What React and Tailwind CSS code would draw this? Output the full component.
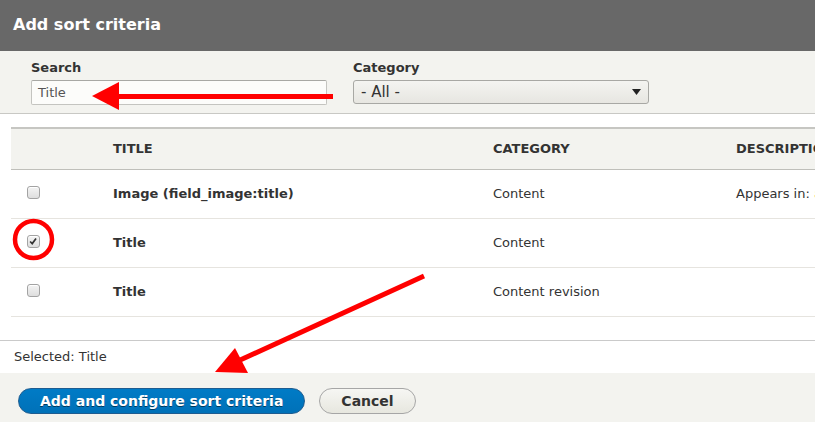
import React from "react";

function Checkbox({ checked }) {
  return (
    <span className="relative inline-block w-[13px] h-[13px] rounded-[3px] border border-[#a3a3a3] bg-gradient-to-b from-[#f4f4f4] to-[#dedede] shadow-[inset_0_1px_0_#fff]">
      {checked && (
        <svg viewBox="0 0 13 13" className="absolute left-0 top-0 w-[11px] h-[11px]">
          <path d="M2.5 6.5 L5 9 L9.5 3" fill="none" stroke="#333" strokeWidth="2" />
        </svg>
      )}
    </span>
  );
}

const rows = [
  { title: "Image (field_image:title)", cat: "Content", desc: true, checked: false },
  { title: "Title", cat: "Content", desc: false, checked: true },
  { title: "Title", cat: "Content revision", desc: false, checked: false },
];

export default function App() {
  return (
    <div className="relative w-[815px] h-[422px] overflow-hidden bg-white text-[#333] font-['DejaVu_Sans',sans-serif]">
      {/* Title bar */}
      <div className="h-[51px] bg-[#686868] flex items-center pl-[13px] pb-[2px] text-white font-bold text-[16px]">
        Add sort criteria
      </div>

      {/* Filters */}
      <div className="h-[63px] bg-[#f3f3ef] border-b border-[#c8c8c4] flex pl-[31px] pt-[9px] gap-[26px]">
        <div className="flex flex-col">
          <label className="font-bold text-[13px] leading-[16px] mb-[4px]">Search</label>
          <div className="w-[296px] h-[25px] border border-[#c4c4c0] border-t-[#a8a8a4] rounded-[2px] bg-[#fcfcfa] flex items-center pl-[6px] text-[13px] text-[#555]">
            Title
          </div>
        </div>
        <div className="flex flex-col">
          <label className="font-bold text-[13px] leading-[16px] mb-[4px]">Category</label>
          <div className="w-[296px] h-[24px] border border-[#a8a8a4] rounded-[3px] bg-gradient-to-b from-[#f4f4f1] to-[#e7e6e1] flex items-center justify-between pl-[7px] pr-[7px] text-[15px] text-[#333]">
            <span>- All -</span>
            <svg width="9" height="6" viewBox="0 0 9 6">
              <path d="M0 0 H9 L4.5 6 Z" fill="#222" />
            </svg>
          </div>
        </div>
      </div>

      <div className="h-[13px]" />

      {/* Table */}
      <div className="ml-[11px] w-[1000px] border-t-2 border-[#c6c6c2]">
        <div className="h-[41px] bg-[#f3f3ef] border-b border-[#bfbfba] flex items-center font-bold text-[13px] uppercase">
          <div className="w-[102px]" />
          <div className="w-[380px]">Title</div>
          <div className="w-[243px]">Category</div>
          <div>Description</div>
        </div>
        {rows.map((r, i) => (
          <div key={i} className="h-[49px] border-b border-[#e6e4df] flex items-center text-[13px]">
            <div className="w-[102px] pl-[16px] flex items-center -mt-[4px]">
              <Checkbox checked={r.checked} />
            </div>
            <div className="w-[380px] font-bold">{r.title}</div>
            <div className="w-[243px]">{r.cat}</div>
            <div className="whitespace-nowrap">
              {r.desc && (
                <>
                  Appears in: <span className="text-[#e8a33d]">article</span>
                </>
              )}
            </div>
          </div>
        ))}
      </div>

      <div className="h-[23px]" />

      {/* Selected */}
      <div className="h-[33px] border-t border-[#cacaca] flex items-center pl-[14px] text-[13px]">
        Selected: Title
      </div>

      {/* Button pane */}
      <div className="h-[49px] bg-[#f3f3ef] flex items-start pt-[15px] pl-[18px] gap-[14px]">
        <button className="h-[26px] px-[21px] rounded-full border border-[#1e5c90] bg-gradient-to-b from-[#007bc6] to-[#0071b8] text-white font-bold text-[14px] leading-none [text-shadow:0_1px_rgba(0,0,0,0.5)]">
          Add and configure sort criteria
        </button>
        <button className="h-[26px] px-[21px] rounded-full border border-[#a6a6a6] bg-gradient-to-b from-[#f6f6f3] to-[#e7e7df] text-[#333] font-bold text-[14px] leading-none">
          Cancel
        </button>
      </div>

      {/* Annotations */}
      <svg className="absolute left-0 top-0 pointer-events-none" width="815" height="422" viewBox="0 0 815 422">
        <line x1="333" y1="96.5" x2="115" y2="96.5" stroke="#ff0000" strokeWidth="5" />
        <polygon points="92,96 119,82 119,110" fill="#ff0000" />
        <circle cx="33.5" cy="239.5" r="18.5" fill="none" stroke="#ff0000" strokeWidth="4.5" />
        <line x1="424" y1="276" x2="238" y2="361" stroke="#ff0000" strokeWidth="5" />
        <polygon points="215,372 235,348 248,373" fill="#ff0000" />
      </svg>
    </div>
  );
}
